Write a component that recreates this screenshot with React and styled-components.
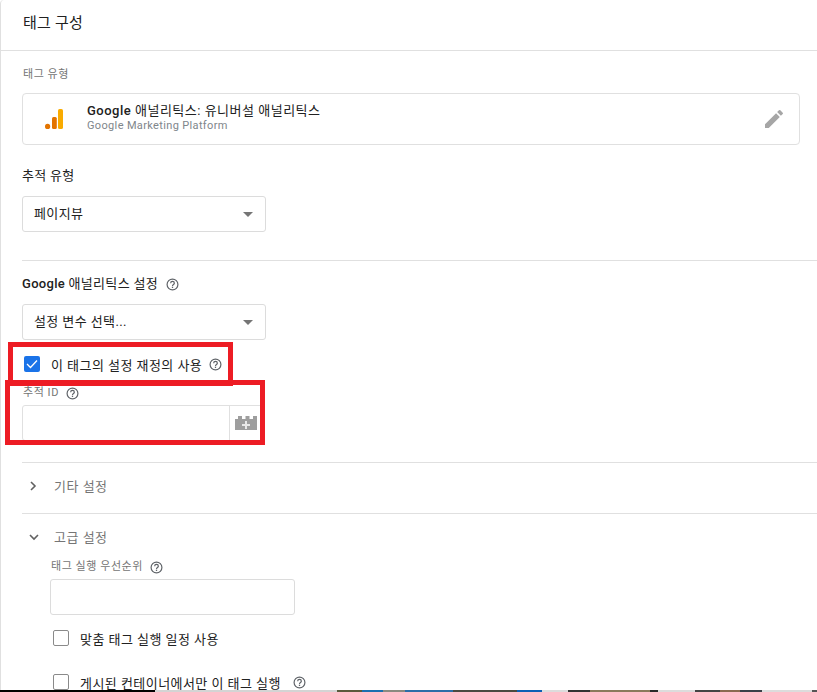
import React from "react";
import styled, { createGlobalStyle } from "styled-components";

const GlobalStyle = createGlobalStyle`
  html, body {
    margin: 0;
    padding: 0;
    background: #fff;
    overflow: hidden;
  }
  body {
    font-family: Roboto, "Noto Sans CJK KR", sans-serif;
  }
`;

const Page = styled.div`
  position: relative;
  width: 817px;
  height: 692px;
  overflow: hidden;
  background: #fff;
  color: #212121;
`;

const Card = styled.div`
  border-left: 1px solid #e0e0e0;
  border-top-left-radius: 4px;
  height: 692px;
  box-sizing: border-box;
`;

const Header = styled.div`
  height: 51px;
  box-sizing: border-box;
  border-bottom: 1px solid #e0e0e0;
  padding: 14px 0 0 22px;
  font-size: 15px;
  line-height: 18px;
  letter-spacing: 0.2px;
  color: #212121;
`;

const Body = styled.div`
  padding: 17px 0 0 21px;
`;

const SmallLabel = styled.div`
  display: flex;
  align-items: center;
  gap: 7px;
  padding-left: 1px;
  font-size: 11px;
  line-height: 14px;
  letter-spacing: 0.55px;
  color: #757575;
  margin-top: ${(p) => p.$top || 0}px;
`;

const TypeCard = styled.div`
  display: flex;
  align-items: center;
  width: 778px;
  height: 52px;
  box-sizing: border-box;
  margin-top: 11px;
  border: 1px solid #e0e0e0;
  border-radius: 4px;
  padding: 0 13px 0 22px;
`;

const TypeText = styled.div`
  margin-left: 24px;
  padding-bottom: 3px;
  flex: 1;
`;

const TypeTitle = styled.div`
  font-size: 13px;
  line-height: 16px;
  letter-spacing: 0.5px;
  color: #212121;
  b {
    font-weight: 500;
  }
`;

const TypeSub = styled.div`
  font-size: 11px;
  line-height: 14px;
  letter-spacing: 0.35px;
  color: #80868b;
`;

const FieldLabel = styled.div`
  display: flex;
  align-items: center;
  gap: 8px;
  font-size: 13px;
  line-height: 16px;
  letter-spacing: 0.3px;
  color: #212121;
  margin-top: ${(p) => p.$top}px;
  b {
    font-weight: 500;
  }
`;

const Select = styled.div`
  display: flex;
  align-items: center;
  justify-content: space-between;
  width: 244px;
  height: 36px;
  box-sizing: border-box;
  margin-top: 12px;
  border: 1px solid #dcdcdc;
  border-radius: 3px;
  padding: 0 12px 0 11px;
  font-size: 13px;
  letter-spacing: 0.4px;
  color: #212121;
`;

const SelectText = styled.span`
  padding-bottom: 3px;
`;

const Arrow = styled.span`
  width: 0;
  height: 0;
  border-left: 5px solid transparent;
  border-right: 5px solid transparent;
  border-top: 5px solid #757575;
`;

const Divider = styled.div`
  height: 1px;
  background: #e0e0e0;
  margin-top: ${(p) => p.$top}px;
`;

const CheckRow = styled.div`
  display: flex;
  align-items: center;
  margin-top: ${(p) => p.$top}px;
  margin-left: ${(p) => p.$left}px;
  height: 18px;
  font-size: 13px;
  letter-spacing: 0.45px;
  color: #212121;
`;

const CheckBox = styled.span`
  display: inline-flex;
  align-items: center;
  justify-content: center;
  width: 16px;
  height: 16px;
  box-sizing: border-box;
  border-radius: 2px;
  border: ${(p) => (p.$on ? "none" : "1px solid #8a8a8a")};
  background: ${(p) => (p.$on ? "#1a73e8" : "#fff")};
  margin-right: 11px;
`;

const HelpWrap = styled.span`
  display: inline-flex;
  margin-left: ${(p) => p.$left || 0}px;
`;

const InputRow = styled.div`
  display: flex;
  width: 239px;
  height: 36px;
  margin-top: 5px;
  border: 1px solid #e0e0e0;
  border-radius: 3px 0 0 3px;
  box-sizing: border-box;
`;

const InputBlank = styled.div`
  flex: 1;
  border-right: 1px solid #e0e0e0;
`;

const BrickSlot = styled.div`
  width: 28px;
  display: flex;
  align-items: center;
  justify-content: center;
  padding-left: 2px;
`;

const Section = styled.div`
  display: flex;
  align-items: center;
  height: 50px;
  box-sizing: border-box;
  padding: 0 0 5px 7px;
  font-size: 13px;
  letter-spacing: 0.5px;
  color: #757575;
`;

const Chevron = styled.span`
  display: inline-flex;
  width: 12px;
  margin-right: 13px;
`;

const Nested = styled.div`
  padding-left: 28px;
`;

const PriorityInput = styled.div`
  width: 245px;
  height: 36px;
  box-sizing: border-box;
  margin-top: 5px;
  border: 1px solid #dcdcdc;
  border-radius: 3px;
`;

const Highlight = styled.div`
  position: absolute;
  left: ${(p) => p.$x}px;
  top: ${(p) => p.$y}px;
  width: ${(p) => p.$w}px;
  height: ${(p) => p.$h}px;
  box-sizing: border-box;
  border: 5px solid #ed1c24;
  pointer-events: none;
`;

// edge of the taskbar caught at the bottom of the screenshot
const BottomEdge = styled.div`
  position: absolute;
  left: 0;
  right: 0;
  bottom: 0;
  height: 2px;
  background: linear-gradient(
    to right,
    #000 155px,
    #d4d4d4 155px 337px,
    #5a5a3c 337px 362px,
    #1a6fb0 362px 383px,
    #8a8a80 383px 405px,
    #2b6ea8 405px 453px,
    #4a4a40 453px 517px,
    #0d5fb5 517px 542px,
    #dcdcdc 542px 568px,
    #333 568px 590px,
    #8a7a5c 590px 650px,
    #2a2a2a 650px 658px,
    #dcdcdc 658px 695px,
    #444 695px 720px,
    #8a6a50 720px 740px,
    #3a4048 740px 762px,
    #dcdcdc 762px 812px,
    #555 812px
  );
`;

const Help = ({ size = 13 }) => (
  <svg width={size} height={size} viewBox="0 0 24 24" fill="none">
    <circle cx="12" cy="12" r="10" stroke="#5f6368" strokeWidth="2.2" />
    <path
      d="M8.6 9.6a3.4 3.4 0 0 1 6.8 0c0 2.4-3.4 2.4-3.4 5"
      stroke="#5f6368"
      strokeWidth="2.2"
    />
    <rect x="10.8" y="16" width="2.4" height="2.4" fill="#5f6368" />
  </svg>
);

const AnalyticsLogo = () => (
  <svg width="18" height="20" viewBox="0 0 18 20">
    <circle cx="2.6" cy="17.4" r="2.6" fill="#e37400" />
    <rect x="7" y="8" width="4.8" height="12" rx="1.5" fill="#e37400" />
    <rect x="13" y="0" width="5" height="20" rx="1.6" fill="#f9ab00" />
  </svg>
);

const Pencil = () => (
  <svg width="24" height="24" viewBox="0 0 24 24">
    <path
      d="M3 17.25V21h3.75L17.81 9.94l-3.75-3.75L3 17.25zM20.71 7.04a1 1 0 0 0 0-1.41l-2.34-2.34a1 1 0 0 0-1.41 0l-1.83 1.83 3.75 3.75 1.83-1.83z"
      fill="#a6a6a6"
    />
  </svg>
);

const Brick = () => (
  <svg width="22" height="14" viewBox="0 0 22 14">
    <path
      d="M0 3h3V0h4v3h3.5V0h4v3H18V0h4v14H0z"
      fill="#9e9e9e"
    />
    <path d="M10 5h2v3h3v2h-3v3h-2v-3H7V8h3z" fill="#e8e8e8" />
  </svg>
);

const ChevronRight = () => (
  <svg width="8" height="10" viewBox="0 0 8 10" fill="none">
    <path d="M2 1l4 4-4 4" stroke="#616161" strokeWidth="1.6" />
  </svg>
);

const ChevronDown = () => (
  <svg width="10" height="8" viewBox="0 0 10 8" fill="none">
    <path d="M1 2l4 4 4-4" stroke="#616161" strokeWidth="1.6" />
  </svg>
);

const Tick = () => (
  <svg width="12" height="10" viewBox="0 0 12 10" fill="none">
    <path d="M1 5l3.5 3.5L11 1.5" stroke="#fff" strokeWidth="1.3" />
  </svg>
);

export default function App() {
  return (
    <Page>
      <GlobalStyle />
      <Card>
        <Header>태그 구성</Header>
        <Body>
          <SmallLabel>태그 유형</SmallLabel>
          <TypeCard>
            <AnalyticsLogo />
            <TypeText>
              <TypeTitle>
                <b>Google</b> 애널리틱스: 유니버설 애널리틱스
              </TypeTitle>
              <TypeSub>Google Marketing Platform</TypeSub>
            </TypeText>
            <Pencil />
          </TypeCard>

          <FieldLabel $top={23}>추적 유형</FieldLabel>
          <Select>
            <SelectText>페이지뷰</SelectText>
            <Arrow />
          </Select>
          <Divider $top={28} />

          <FieldLabel $top={15}>
            <span>
              <b>Google</b> 애널리틱스 설정
            </span>
            <Help />
          </FieldLabel>
          <Select>
            <SelectText>설정 변수 선택...</SelectText>
            <Arrow />
          </Select>

          <CheckRow $top={15} $left={2}>
            <CheckBox $on>
              <Tick />
            </CheckBox>
            이 태그의 설정 재정의 사용
            <HelpWrap $left={7}>
              <Help />
            </HelpWrap>
          </CheckRow>
          <SmallLabel $top={13}>
            추적 ID
            <Help />
          </SmallLabel>
          <InputRow>
            <InputBlank />
            <BrickSlot>
              <Brick />
            </BrickSlot>
          </InputRow>
          <Divider $top={21} />

          <Section>
            <Chevron>
              <ChevronRight />
            </Chevron>
            기타 설정
          </Section>
          <Divider $top={0} />
          <Section>
            <Chevron>
              <ChevronDown />
            </Chevron>
            고급 설정
          </Section>

          <Nested>
            <SmallLabel $top={-4}>
              태그 실행 우선순위
              <Help />
            </SmallLabel>
            <PriorityInput />
            <CheckRow $top={14} $left={3}>
              <CheckBox />
              맞춤 태그 실행 일정 사용
            </CheckRow>
            <CheckRow $top={26} $left={3}>
              <CheckBox />
              게시된 컨테이너에서만 이 태그 실행
              <HelpWrap $left={12}>
                <Help />
              </HelpWrap>
            </CheckRow>
          </Nested>
        </Body>
      </Card>
      <Highlight $x={8} $y={342} $w={225} $h={44} />
      <Highlight $x={5} $y={380} $w={260} $h={65} />
      <BottomEdge />
    </Page>
  );
}
